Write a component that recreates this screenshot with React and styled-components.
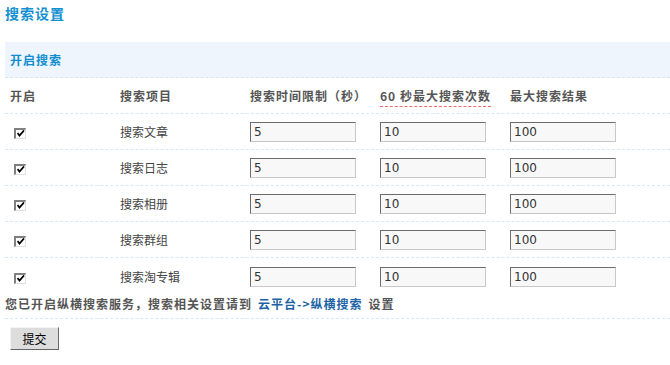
import React from "react";
import styled, { createGlobalStyle } from "styled-components";

const GlobalStyle = createGlobalStyle`
  body {
    margin: 0;
    background: #fff;
    font-family: "Noto Sans CJK SC", "Noto Sans", sans-serif;
    font-size: 12px;
    color: #444;
  }
`;

const Page = styled.div`
  width: 665px;
  padding-left: 5px;
`;

const Title = styled.h2`
  margin: 0 0 16px;
  height: 26px;
  line-height: 26px;
  font-size: 14px;
  font-weight: bold;
  letter-spacing: 1px;
  color: #1390d0;
`;

const Bar = styled.div`
  height: 35px;
  line-height: 35px;
  padding-left: 5px;
  background: #eef5fc;
  border-bottom: 1px dashed #dbe4ee;
  font-weight: bold;
  letter-spacing: 1px;
  color: #0f8dd0;
`;

const Row = styled.div`
  display: grid;
  grid-template-columns: 110px 130px 130px 130px 1fr;
  align-items: center;
  height: ${({ last }) => (last ? "37px" : "35px")};
  border-bottom: ${({ last }) => (last ? "none" : "1px dashed #d6e8f6")};
  font-weight: ${({ head }) => (head ? "bold" : "normal")};
  letter-spacing: ${({ head }) => (head ? "1px" : "0")};
  color: ${({ head }) => (head ? "#555" : "#444")};
`;

const Cell = styled.div`
  padding-left: 5px;
  white-space: nowrap;
`;

const Hint = styled.span`
  padding-bottom: 2px;
  border-bottom: 1px dashed #f26a6a;
`;

const Check = styled.span`
  display: inline-block;
  box-sizing: border-box;
  width: 12px;
  height: 11px;
  margin-left: 4px;
  background: #fff;
  border-top: 2px solid #808080;
  border-left: 2px solid #808080;
  border-right: 1px solid #e0e0e0;
  border-bottom: 1px solid #e0e0e0;
  vertical-align: middle;
`;

const Field = styled.input`
  box-sizing: border-box;
  width: 106px;
  height: 20px;
  padding: 0 3px;
  background: #f8f8f8;
  border: 1px solid;
  border-color: #6b6b6b #c8c8c8 #c8c8c8 #6b6b6b;
  font-family: "DejaVu Sans", sans-serif;
  font-size: 12px;
  color: #333;
  outline: none;
`;

const Note = styled.div`
  height: 23px;
  line-height: 18px;
  border-bottom: 1px dashed #d6e8f6;
  font-weight: bold;
  letter-spacing: 1px;
  color: #555;
`;

const Link = styled.a`
  margin: 0 6px;
  color: #1c63a6;
  text-decoration: none;
`;

const Actions = styled.div`
  padding: 8px 0 0 5px;
`;

const Button = styled.button`
  width: 49px;
  height: 23px;
  padding: 0;
  background: #dddddd;
  border: 1px solid;
  border-color: #f4f4f4 #666 #666 #f4f4f4;
  font-family: "Noto Sans CJK SC", sans-serif;
  font-size: 12px;
  color: #000;
`;

const items = ["搜索文章", "搜索日志", "搜索相册", "搜索群组", "搜索淘专辑"];

const CheckBox = () => (
  <Check>
    <svg width="8" height="7" viewBox="0 0 8 7" style={{ display: "block", margin: "0 0 0 1px" }}>
      <path d="M0.5 3 L2.5 5.5 L7 0.5" stroke="#000" strokeWidth="1.8" fill="none" />
    </svg>
  </Check>
);

export default function App() {
  return (
    <Page>
      <GlobalStyle />
      <Title>搜索设置</Title>
      <Bar>开启搜索</Bar>
      <Row head>
        <Cell>开启</Cell>
        <Cell>搜索项目</Cell>
        <Cell>搜索时间限制（秒）</Cell>
        <Cell>
          <Hint>60 秒最大搜索次数</Hint>
        </Cell>
        <Cell>最大搜索结果</Cell>
      </Row>
      {items.map((name, i) => (
        <Row key={name} last={i === items.length - 1}>
          <Cell>
            <CheckBox />
          </Cell>
          <Cell>{name}</Cell>
          <Cell>
            <Field defaultValue="5" />
          </Cell>
          <Cell>
            <Field defaultValue="10" />
          </Cell>
          <Cell>
            <Field defaultValue="100" />
          </Cell>
        </Row>
      ))}
      <Note>
        您已开启纵横搜索服务，搜索相关设置请到
        <Link href="#">云平台-&gt;纵横搜索</Link>
        设置
      </Note>
      <Actions>
        <Button>提交</Button>
      </Actions>
    </Page>
  );
}
